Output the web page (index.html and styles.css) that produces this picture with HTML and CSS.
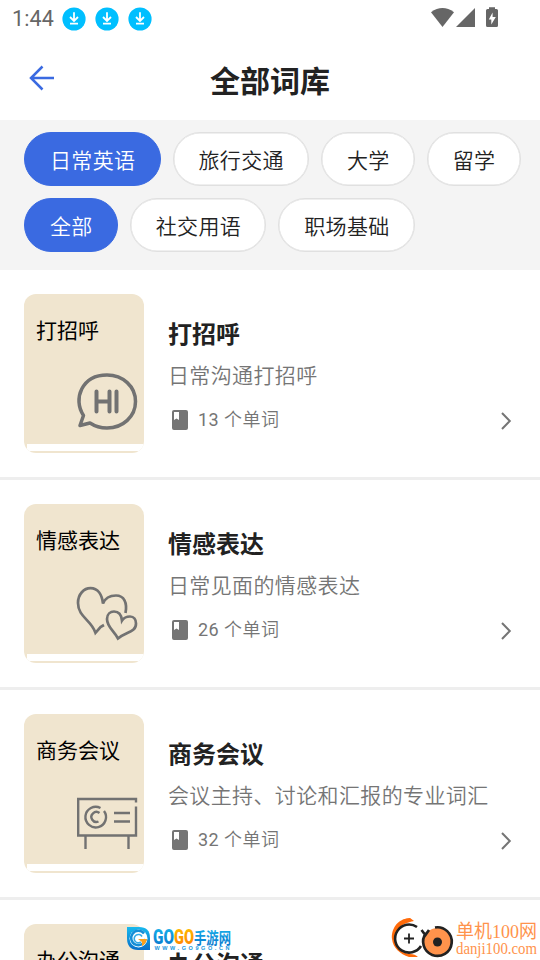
FILE: index.html
```html
<!DOCTYPE html>
<html lang="zh-CN">
<head>
<meta charset="utf-8">
<title>全部词库</title>
<link rel="stylesheet" href="styles.css">
</head>
<body>
<svg class="defs" width="0" height="0">
  <symbol id="download" viewBox="0 0 24 24">
    <circle cx="12" cy="12" r="11.6" fill="#00bfff"/>
    <path d="M12 5.300v8.500M8 10l4 4 4-4M8 16.700h8" fill="none" stroke="#fff" stroke-width="1.800"/>
  </symbol>
  <symbol id="book" viewBox="0 0 24 24">
    <path fill="#757575" fill-rule="evenodd" d="M6 2h12a2 2 0 0 1 2 2v16a2 2 0 0 1-2 2H6a2 2 0 0 1-2-2V4a2 2 0 0 1 2-2zM6 4v8l2.5-1.5L11 12V4z"/>
  </symbol>
  <symbol id="chevron" viewBox="0 0 12 20">
    <path d="M2 2l7.800 8L2 18" fill="none" stroke="#757575" stroke-width="2"/>
  </symbol>
</svg>
<div class="screen">
  <header class="status">
    <span class="clock">1:44</span>
    <svg class="dl"><use href="#download"/></svg>
    <svg class="dl"><use href="#download"/></svg>
    <svg class="dl"><use href="#download"/></svg>
    <svg class="system" width="70" height="22" viewBox="0 0 70 22" fill="#666">
      <path d="M0 4.200Q11.500-4 23 4.200L11.500 19z"/>
      <path d="M44 0v19H25z"/>
      <path fill-rule="evenodd" d="M58-.8h6V1h1.500q1.500 0 1.500 1.500v15q0 1.500-1.500 1.500h-9q-1.500 0-1.500-1.500v-15Q55 1 56.500 1H58zM61.600 4.500L57.800 11.500h2.500v5L64.800 9h-3.200z"/>
    </svg>
  </header>
  <div class="appbar">
    <svg class="back" width="26" height="26" viewBox="0 0 26 26"><path d="M25 13H2M13.500 1.500L2 13l11.500 11.500" fill="none" stroke="#3a6ae1" stroke-width="2.500"/></svg>
    <h1>全部词库</h1>
  </div>
  <nav class="filters">
    <div class="chips"><span class="chip on">日常英语</span><span class="chip">旅行交通</span><span class="chip">大学</span><span class="chip">留学</span></div>
    <div class="chips"><span class="chip on">全部</span><span class="chip">社交用语</span><span class="chip">职场基础</span></div>
  </nav>
  <main>
    <article class="item">
      <div class="cover"><b>打招呼</b>
        <svg class="art" viewBox="0 0 62 62" fill="none" stroke="#727272">
          <path d="M7.500 43.500C-3.500 27 6 3 31 3c16 0 28.500 11.500 28.500 26.500S47 56 31 56c-7 0-12.500-2-17-5L4 53.500z" stroke-width="3.500" stroke-linejoin="round"/>
          <path d="M20.500 19.500v20M33.500 19.500v20M20.500 29.500h13M40.500 19.500v20" stroke-width="4" stroke-linecap="round"/>
        </svg>
      </div>
      <div class="info"><h2>打招呼</h2><p>日常沟通打招呼</p><div class="count"><svg class="book"><use href="#book"/></svg><span><i>13</i> 个单词</span></div></div>
      <svg class="chevron"><use href="#chevron"/></svg>
    </article>
    <article class="item">
      <div class="cover"><b>情感表达</b>
        <svg class="art" viewBox="0 0 62 62" fill="none" stroke="#727272" stroke-width="2.700">
          <path d="M28 43l-3.500 2-5 5.800C15.500 38 2 35 2 21 2 12 8 6.200 14.500 6.200 22 6.200 26 13 27 21.500 29 16.500 34 13.500 40 13.500c8 0 11.500 7 9.500 17.500"/>
          <path d="M42 56.500C37.500 48 31 45 31 37c0-5 3.500-7.500 7-7.500 5 0 7.500 4 8 9 2-3 5-4 8-4 4 0 6 3 6 7 0 9-9.500 8-18 15z"/>
        </svg>
      </div>
      <div class="info"><h2>情感表达</h2><p>日常见面的情感表达</p><div class="count"><svg class="book"><use href="#book"/></svg><span><i>26</i> 个单词</span></div></div>
      <svg class="chevron"><use href="#chevron"/></svg>
    </article>
    <article class="item">
      <div class="cover"><b>商务会议</b>
        <svg class="art" viewBox="0 0 62 62" fill="none" stroke="#727272" stroke-width="2.400">
          <path d="M60 10.500V7H2.200v36.500H60V14.500M9.500 43.500V57M52.500 43.500V57M38 21h16M38 29.500h16"/>
          <path d="M24.500 16A10.300 10.300 0 1 0 28 19"/>
          <path d="M23.500 21a5 5 0 1 0-1 8.500"/>
        </svg>
      </div>
      <div class="info"><h2>商务会议</h2><p>会议主持、讨论和汇报的专业词汇</p><div class="count"><svg class="book"><use href="#book"/></svg><span><i>32</i> 个单词</span></div></div>
      <svg class="chevron"><use href="#chevron"/></svg>
    </article>
    <article class="item">
      <div class="cover"><b>办公沟通</b></div>
      <div class="info"><h2>办公沟通</h2></div>
    </article>
  </main>
  <svg class="mark gogo" width="106" height="28" viewBox="0 0 106 28">
    <defs>
      <linearGradient id="blue" x2="0" y2="1"><stop stop-color="#18b9ee"/><stop offset="1" stop-color="#076fc9"/></linearGradient>
      <linearGradient id="gold" x2="0" y2="1"><stop stop-color="#ffc400"/><stop offset="1" stop-color="#ff7a00"/></linearGradient>
    </defs>
    <path d="M1 1h12q11 0 11 11v12H12Q1 24 1 12z" fill="url(#blue)"/>
    <circle cx="12.500" cy="12.500" r="9" fill="#fff"/>
    <path d="M18 7.500A7.200 7.200 0 1 0 19.500 13" fill="none" stroke="#168ed6" stroke-width="2.500"/>
    <path d="M16 10.500a4.200 4.200 0 1 0-1 5.500" fill="none" stroke="#35abe5" stroke-width="1.600"/>
    <path d="M12 13h9q-1 5-5 7v-4z" fill="#f9a01b"/>
    <g class="gogo-name">
      <text x="27" y="18" textLength="21" lengthAdjust="spacingAndGlyphs" fill="url(#blue)">GO</text>
      <text x="48" y="18" textLength="20" lengthAdjust="spacingAndGlyphs" fill="url(#gold)">GO</text>
      <text class="gogo-cn" x="68" y="18" textLength="37" lengthAdjust="spacingAndGlyphs" fill="url(#blue)">手游网</text>
    </g>
    <text class="gogo-url" x="28.500" y="24" textLength="75" fill="#1595dc">WWW.GO9GO.CN</text>
  </svg>
  <svg class="mark danji" width="150" height="46" viewBox="0 0 150 46">
    <path d="M20 3.500C7 3 1 15 2 24s8 15 17 18h9q-3-3-8-3C10 38 4.500 29 5.500 21S12 9 20 7l2-2z" fill="#ff6b0b"/>
    <path d="M20 3q-8 0-10 6l14-3z" fill="#ff6b0b"/>
    <circle cx="19" cy="23.500" r="13.500" fill="#fff"/>
    <path d="M27 12A14 14 0 1 0 31 31M31.500 15l3 4" fill="none" stroke="#222" stroke-width="2.600"/>
    <path d="M19 18.500v10M14 23.500h10" stroke="#222" stroke-width="1.800"/>
    <circle cx="47.500" cy="27" r="14" fill="#ff934c"/>
    <path d="M45 12.500A14.300 14.300 0 1 1 36 18M34 22l5-7" fill="none" stroke="#222" stroke-width="2.700"/>
    <circle cx="47.500" cy="27" r="4.500" fill="#222"/>
    <text class="danji-cn" x="66" y="22.500" textLength="81" lengthAdjust="spacingAndGlyphs">单机100网</text>
    <text class="danji-url" x="66" y="38.500" textLength="81" lengthAdjust="spacingAndGlyphs">danji100.com</text>
  </svg>
</div>
</body>
</html>
```
FILE: styles.css
```css
* { box-sizing: border-box; }
body { margin: 0; background: #fff; font-family: Roboto, "Noto Sans CJK SC", sans-serif; color: #222; }
.defs { position: absolute; }
.screen { position: relative; width: 540px; height: 960px; overflow: hidden; }
.status { height: 36px; padding: 1px 42px 0 12px; display: flex; align-items: center; color: #666; }
.clock { width: 49.500px; font-size: 21.500px; letter-spacing: .1px; }
.dl { width: 24px; height: 24px; margin-right: 9px; }
.system { margin: 0 -3px 0 auto; overflow: visible; }
.appbar { position: relative; height: 84px; display: flex; align-items: center; justify-content: center; }
.back { position: absolute; left: 29px; top: 29px; }
h1 { margin: 8px 0 0; font-size: 30px; line-height: 40px; font-weight: 700; }
.filters { height: 150px; background: #f4f4f4; padding: 12px 0 0 24px; display: flex; flex-direction: column; gap: 12px; }
.chips { display: flex; gap: 12px; }
.chip { height: 54px; padding: 3px 24px 0 25px; border: 1px solid #e0e0e0; border-radius: 27px; background: #fff; font-size: 21px; line-height: 50px; letter-spacing: .375px; font-weight: 350; white-space: nowrap; flex: none; box-shadow: inset 0 0 0 .5px #e0e0e0; }
.on { background: #3a6ae1; border-color: #3a6ae1; box-shadow: none; color: #fff; }
.item { height: 210px; padding: 24px 28px 0 24px; border-bottom: 3px solid #eee; display: flex; }
.cover { position: relative; width: 120px; height: 159px; flex: none; border-radius: 12px; overflow: hidden; background: #f0e5cf; padding: 21px 12px; }
.cover b { display: block; font-size: 21px; line-height: 32px; font-weight: 400; color: #000; white-space: nowrap; }
.cover::after { content: ""; position: absolute; left: 3px; right: 0; bottom: 2px; height: 7.500px; background: #fff; }
.art { position: absolute; left: 52px; top: 78px; width: 62px; height: 62px; }
.info { padding: 22px 0 0 24px; flex: 1; }
h2 { margin: 0; font-size: 24px; line-height: 38px; font-weight: 700; }
p { margin: 4px 0 0; font-size: 21px; line-height: 36px; letter-spacing: .375px; font-weight: 350; color: #757575; }
.count { margin-top: 11px; display: flex; align-items: center; font-size: 18px; line-height: 30px; letter-spacing: .5px; font-weight: 350; color: #757575; }
.count i { font-style: normal; font-weight: 400; }
.book { width: 24px; height: 24px; margin-right: 6px; }
.chevron { width: 12px; height: 20px; margin: 116.500px .500px 0 -.500px; flex: none; }
.mark { position: absolute; overflow: visible; }
.gogo { left: 126px; top: 926px; }
.gogo-name { font: 900 20px Roboto, sans-serif; }
.gogo-cn { font: 700 16px "Noto Sans CJK SC", sans-serif; }
.gogo-url { font: 700 5.500px "Liberation Sans", sans-serif; }
.danji { left: 390px; top: 915px; }
.danji-cn { font: 19px "Liberation Serif", "Noto Sans CJK SC", serif; fill: #ff934c; }
.danji-url { font: 16px "Liberation Serif", serif; fill: #ff934c; }
```
